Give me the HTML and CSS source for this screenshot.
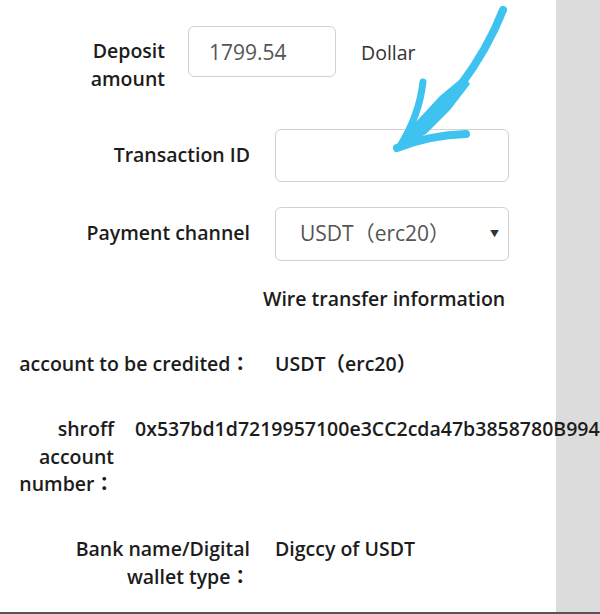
FILE: index.html
```html
<html>
<head>
<meta http-equiv="Content-Type" content="text/html; charset=UTF-8">
<link rel="stylesheet" href="styles.css">
</head>
<body>
<div class="page">
<div class="content">
    <div class="row row-deposit">
        <label class="label label-deposit">Deposit amount</label>
        <input class="field field-amount" type="text" value="1799.54">
        <span class="unit">Dollar</span>
    </div>
    <div class="row row-txid">
        <label class="label label-wide">Transaction ID</label>
        <input class="field field-wide" type="text" value="">
    </div>
    <div class="row row-channel">
        <label class="label label-wide">Payment channel</label>
        <div class="field field-wide select">
            <span>USDT（erc20）</span>
            <span class="caret">&#9660;</span>
        </div>
    </div>
    <div class="info-title">Wire transfer information</div>
    <div class="row row-info">
        <div class="label label-info">account to be credited：</div>
        <div class="value">USDT（erc20）</div>
    </div>
    <div class="row row-info">
        <div class="label label-narrow">shroff account number：</div>
        <div class="value">0x537bd1d7219957100e3CC2cda47b3858780B9944</div>
    </div>
    <div class="row row-info">
        <div class="label label-bank">Bank name/Digital wallet type：</div>
        <div class="value">Digccy of USDT</div>
    </div>
</div>
<svg class="scribble" width="600" height="614" viewBox="0 0 600 614">
    <g fill="none" stroke="#3ec3f1" stroke-linecap="round" stroke-linejoin="round">
        <path d="M503 10 C 492 38, 478 62, 460 86 L 404 145" stroke-width="8"/>
        <path d="M423 82 Q 419 116 400 146" stroke-width="7"/>
        <path d="M397 148 Q 430 135 466 134" stroke-width="8"/>
    </g>
    <polygon points="464,76 470,84 450,110 426,134 402,148 414,124 440,96" fill="#3ec3f1"/>
</svg>
</div>
</body>
</html>
```

FILE: styles.css
```css
html, body {
    margin: 0;
    overflow: hidden;
}
body {
    font-family: "Open Sans", "Noto Sans CJK JP", sans-serif;
    font-size: 19.5px;
    line-height: 27.5px;
    color: #1c1c1c;
}

/* grey page, white form column on the left */
.page {
    position: relative;
    height: 612px;
    background-color: #dcdcdc;
    border-bottom: 2px solid #555;
}
.content {
    width: 556px;
    height: 100%;
    background-color: #fff;
}

.row {
    display: flex;
    align-items: flex-start;
    white-space: nowrap;
}
.row-deposit {
    padding-top: 26px;
}
.row-txid {
    margin-top: 37px;
}
.row-channel {
    margin-top: 25px;
}
.row-info {
    margin-top: 37.5px;
}

.label {
    margin-top: 12px;
    font-weight: 600;
    text-align: right;
    white-space: normal;
    flex-shrink: 0;
}
.label-deposit {
    width: 100px;
    margin-top: 11px;
    margin-left: 65px;
    margin-right: 23px;
}
.label-wide {
    width: 233px;
    margin-left: 17px;
    margin-right: 25px;
}
.row-info .label {
    margin-top: 0;
}
.label-info {
    width: 240px;
    margin-left: 10px;
    margin-right: 25px;
}
.label-narrow {
    width: 100px;
    margin-left: 14px;
    margin-right: 21px;
}
.label-bank {
    width: 200px;
    margin-left: 50px;
    margin-right: 25px;
}

.field {
    box-sizing: border-box;
    border: 1.5px solid #d2d2d2;
    border-radius: 6px;
    background: #fff;
    font-family: inherit;
    font-size: 21px;
    color: #555;
    outline: none;
}
.field-amount {
    width: 148px;
    height: 51px;
    padding: 0 0 0 20px;
}
.field-wide {
    width: 234px;
    height: 53px;
    padding: 0 0 0 24px;
}
.select {
    display: flex;
    align-items: center;
    justify-content: space-between;
    height: 54px;
    padding-right: 9px;
}
.caret {
    font-size: 9px;
    color: #333;
}
.unit {
    margin-top: 13px;
    margin-left: 25px;
    color: #333;
}

.info-title {
    margin-top: 24px;
    padding-left: 263px;
    font-weight: 600;
}
.value {
    font-weight: 600;
}

.scribble {
    position: absolute;
    top: 0;
    left: 0;
    pointer-events: none;
}
```
